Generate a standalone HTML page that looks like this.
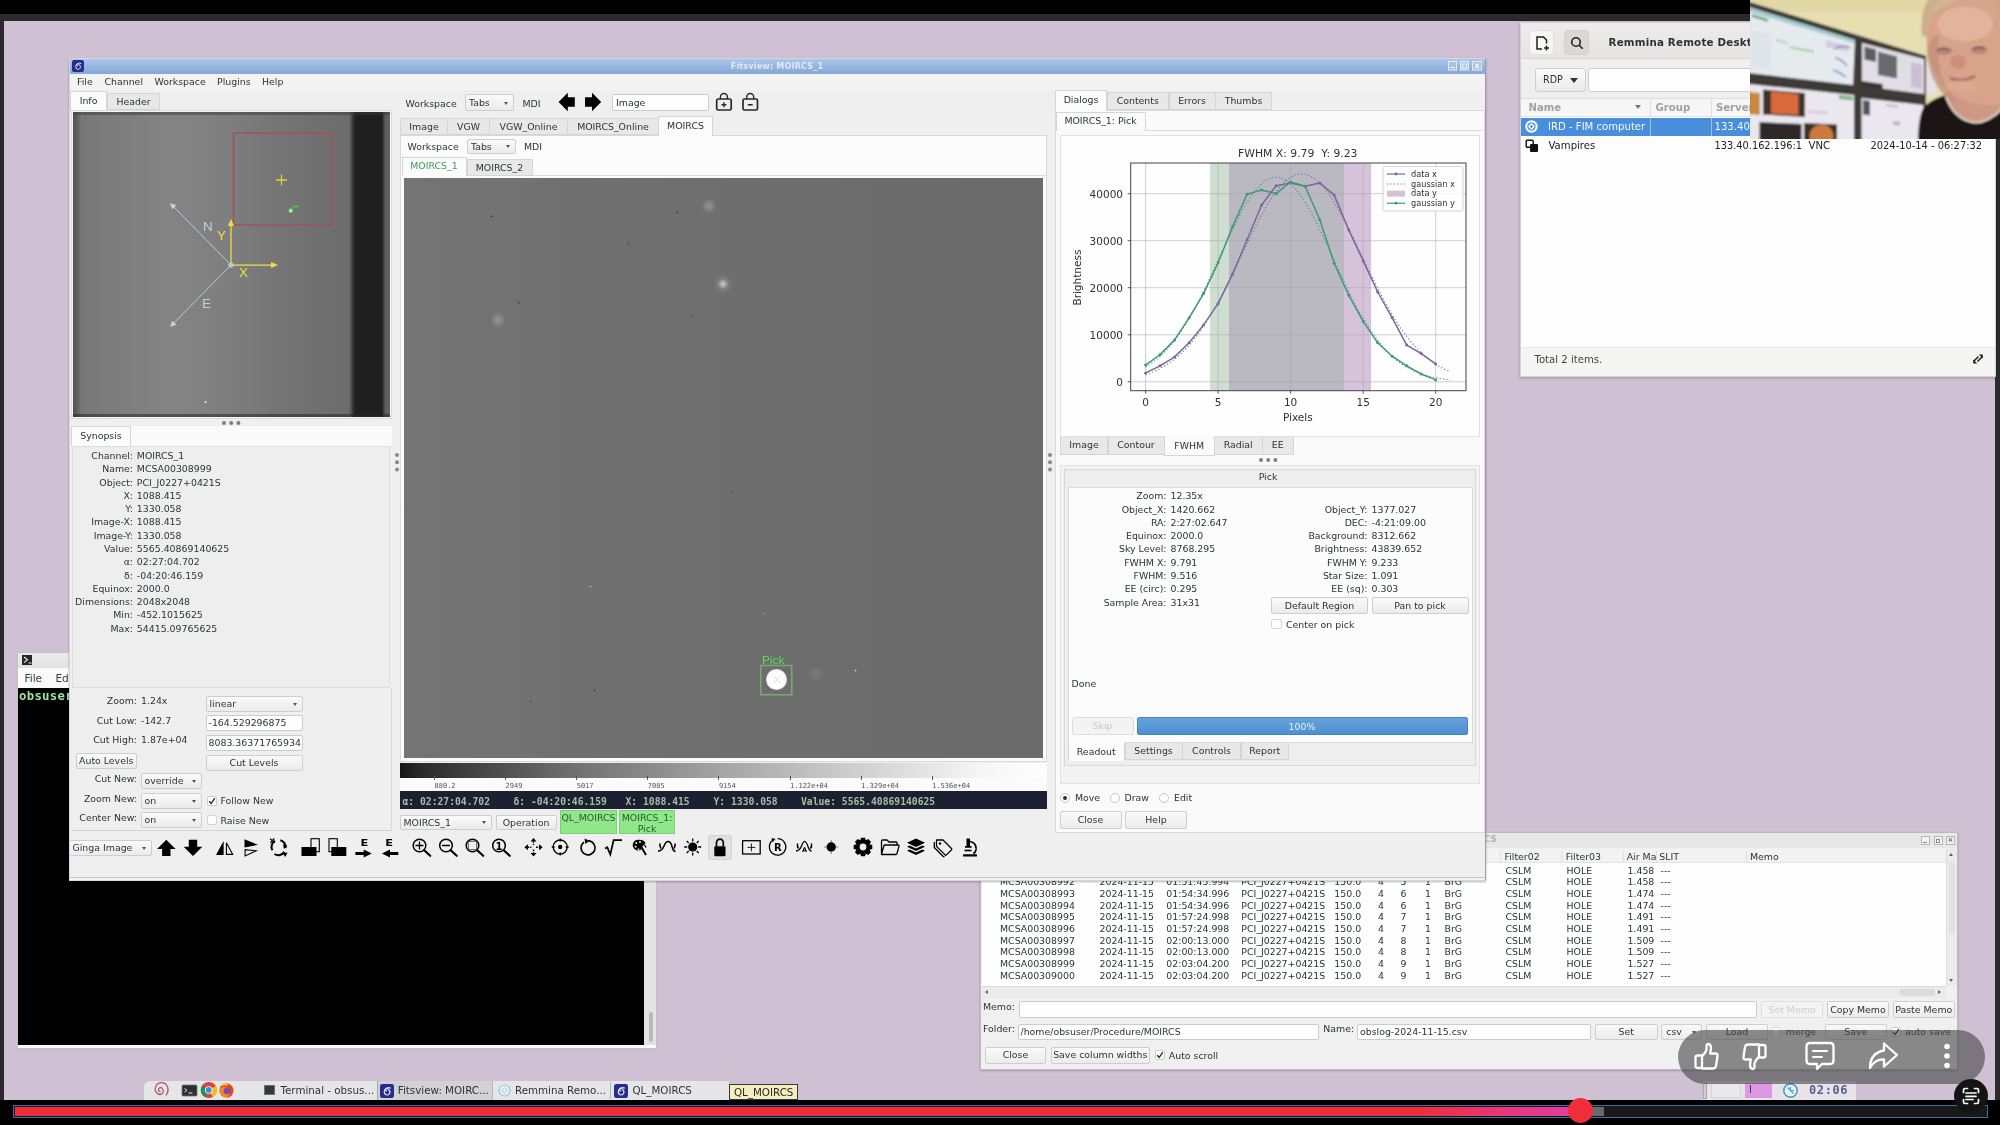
<!DOCTYPE html>
<html><head><meta charset="utf-8"><title>Fitsview: MOIRCS_1</title>
<style>
*{box-sizing:border-box;margin:0;padding:0}
html,body{width:2000px;height:1125px;overflow:hidden;background:#000}
body{position:relative;font-family:"DejaVu Sans","Liberation Sans",sans-serif;font-size:9.4px;color:#2e3436;line-height:13px}
.a{position:absolute}
.t{position:absolute;white-space:nowrap}
.r{text-align:right}
.c{text-align:center}
.btn{position:absolute;border:1px solid #cfcfcf;background:linear-gradient(#fbfbfb,#ececec);border-radius:2px;text-align:center;white-space:nowrap}
.inp{position:absolute;border:1px solid #cdcdcd;background:#fff;border-radius:2px;white-space:nowrap;overflow:hidden}
.tab{position:absolute;border:1px solid #d6d6d6;background:#e9e9e9;text-align:center;white-space:nowrap}
.tab.on{background:#fcfcfc;border-bottom-color:#fcfcfc}
.mono{font-family:"DejaVu Sans Mono","Liberation Mono",monospace}
svg{position:absolute;overflow:visible}
</style></head><body>
<div id="root" style="position:absolute;left:0;top:0;width:2000px;height:1125px;will-change:transform;opacity:.999">
<!-- video frame / desktop -->
<div class="a" style="left:0;top:14px;width:2000px;height:1086px;background:#2b2a2c"></div>
<div class="a" id="desk" style="left:4px;top:21px;width:1991px;height:1079px;background:#d0c1d4"></div>
<!-- terminal window -->
<div class="a" style="left:16.500px;top:652px;width:640px;height:397px;background:#fbfbfa;border:1px solid #c4bfc8"></div>
<div class="a" style="left:17.500px;top:653px;width:80px;height:14.500px;background:linear-gradient(#ececeb,#e2e2e0)"></div>
<div class="a" style="left:21.500px;top:655px;width:10.500px;height:9.500px;background:#23272c"></div>
<svg style="left:21.500px;top:655px" width="11" height="10" viewBox="0 0 11 10"><path d="M2 2l3.500 2.800l-3.500 2.800M6.500 8h3" stroke="#e6e6e6" stroke-width="1.200" fill="none"/></svg>
<div class="t" style="left:24.500px;top:669.500px;font-size:10.500px;line-height:16px;color:#3c3c3c">File&nbsp;&nbsp;&nbsp;&nbsp;Edit</div>
<div class="a" style="left:17.500px;top:687.500px;width:626.500px;height:357.500px;background:#000"></div>
<div class="t mono" style="left:19px;top:689px;font-size:12.300px;font-weight:bold;color:#9fe39f;letter-spacing:0.3px;line-height:14px">obsuser</div>
<div class="a" style="left:644px;top:687.500px;width:12px;height:357.500px;background:#e4e4e4"></div>
<div class="a" style="left:648.500px;top:1012px;width:4px;height:30px;background:#b9b9b9;border-radius:2px"></div>
<!-- QL_MOIRCS obslog window (below fitsview in z-order) -->
<div class="a" style="left:980px;top:832px;width:978px;height:238px;background:#f1f1f1;border:1px solid #bdb9c0;box-shadow:0 1px 2px rgba(0,0,0,.2)"></div>
<div class="a" style="left:981px;top:833px;width:976px;height:15px;background:#e9e9ea"></div>
<div class="t c" style="left:1419px;top:833px;width:100px;font-size:8.6px;font-weight:bold;color:#b4b4b4">QL_MOIRCS</div>
<div class="a" style="left:1921px;top:836px;width:9px;height:9px;border:1px solid #b7b7b7;background:#f4f4f4"></div>
<div class="a" style="left:1933.5px;top:836px;width:9px;height:9px;border:1px solid #b7b7b7;background:#f4f4f4"></div>
<div class="a" style="left:1946px;top:836px;width:9px;height:9px;border:1px solid #b7b7b7;background:#f4f4f4"></div>
<div class="a" style="left:1923px;top:842px;width:4px;height:1px;background:#888"></div>
<div class="a" style="left:1936px;top:838.5px;width:4px;height:4px;border:1px solid #888"></div>
<div class="t" style="left:1947.5px;top:834px;font-size:7px;line-height:12px;color:#666;font-weight:bold">×</div>
<div class="a" style="left:982px;top:849px;width:964px;height:137px;background:#fff"></div>
<div class="a" style="left:982px;top:849px;width:964px;height:14px;background:#f3f3f3;border-bottom:1px solid #e3e3e3"></div>
<div class="t" style="left:1504.5px;top:850.3px">Filter02</div>
<div class="t" style="left:1565.8px;top:850.3px">Filter03</div>
<div class="t" style="left:1626.7px;top:850.3px">Air Ma</div>
<div class="t" style="left:1659.3px;top:850.3px">SLIT</div>
<div class="t" style="left:1750px;top:850.3px">Memo</div>
<div class="a" style="left:1500px;top:851px;width:1px;height:11px;background:#e0e0e0"></div>
<div class="a" style="left:1561px;top:851px;width:1px;height:11px;background:#e0e0e0"></div>
<div class="a" style="left:1622.5px;top:851px;width:1px;height:11px;background:#e0e0e0"></div>
<div class="a" style="left:1655.5px;top:851px;width:1px;height:11px;background:#e0e0e0"></div>
<div class="a" style="left:1746px;top:851px;width:1px;height:11px;background:#e0e0e0"></div>
<div class="t" style="left:0;top:863.5px;width:1800px;height:13px"><span class="t" style="left:1000px;top:0">MCSA00308991</span><span class="t" style="left:1099.5px;top:0">2024-11-15</span><span class="t" style="left:1166.3px;top:0">01:51:45.994</span><span class="t" style="left:1241.3px;top:0">PCI_J0227+0421S</span><span class="t" style="left:1334.3px;top:0">150.0</span><span class="t" style="left:1378px;top:0">4</span><span class="t" style="left:1400.5px;top:0">5</span><span class="t" style="left:1425px;top:0">1</span><span class="t" style="left:1444.5px;top:0">BrG</span><span class="t" style="left:1505.5px;top:0">CSLM</span><span class="t" style="left:1566.5px;top:0">HOLE</span><span class="t" style="left:1627.5px;top:0">1.458</span><span class="t" style="left:1660.5px;top:0">---</span></div>
<div class="t" style="left:0;top:875.2px;width:1800px;height:13px"><span class="t" style="left:1000px;top:0">MCSA00308992</span><span class="t" style="left:1099.5px;top:0">2024-11-15</span><span class="t" style="left:1166.3px;top:0">01:51:45.994</span><span class="t" style="left:1241.3px;top:0">PCI_J0227+0421S</span><span class="t" style="left:1334.3px;top:0">150.0</span><span class="t" style="left:1378px;top:0">4</span><span class="t" style="left:1400.5px;top:0">5</span><span class="t" style="left:1425px;top:0">1</span><span class="t" style="left:1444.5px;top:0">BrG</span><span class="t" style="left:1505.5px;top:0">CSLM</span><span class="t" style="left:1566.5px;top:0">HOLE</span><span class="t" style="left:1627.5px;top:0">1.458</span><span class="t" style="left:1660.5px;top:0">---</span></div>
<div class="t" style="left:0;top:886.9px;width:1800px;height:13px"><span class="t" style="left:1000px;top:0">MCSA00308993</span><span class="t" style="left:1099.5px;top:0">2024-11-15</span><span class="t" style="left:1166.3px;top:0">01:54:34.996</span><span class="t" style="left:1241.3px;top:0">PCI_J0227+0421S</span><span class="t" style="left:1334.3px;top:0">150.0</span><span class="t" style="left:1378px;top:0">4</span><span class="t" style="left:1400.5px;top:0">6</span><span class="t" style="left:1425px;top:0">1</span><span class="t" style="left:1444.5px;top:0">BrG</span><span class="t" style="left:1505.5px;top:0">CSLM</span><span class="t" style="left:1566.5px;top:0">HOLE</span><span class="t" style="left:1627.5px;top:0">1.474</span><span class="t" style="left:1660.5px;top:0">---</span></div>
<div class="t" style="left:0;top:898.6px;width:1800px;height:13px"><span class="t" style="left:1000px;top:0">MCSA00308994</span><span class="t" style="left:1099.5px;top:0">2024-11-15</span><span class="t" style="left:1166.3px;top:0">01:54:34.996</span><span class="t" style="left:1241.3px;top:0">PCI_J0227+0421S</span><span class="t" style="left:1334.3px;top:0">150.0</span><span class="t" style="left:1378px;top:0">4</span><span class="t" style="left:1400.5px;top:0">6</span><span class="t" style="left:1425px;top:0">1</span><span class="t" style="left:1444.5px;top:0">BrG</span><span class="t" style="left:1505.5px;top:0">CSLM</span><span class="t" style="left:1566.5px;top:0">HOLE</span><span class="t" style="left:1627.5px;top:0">1.474</span><span class="t" style="left:1660.5px;top:0">---</span></div>
<div class="t" style="left:0;top:910.3px;width:1800px;height:13px"><span class="t" style="left:1000px;top:0">MCSA00308995</span><span class="t" style="left:1099.5px;top:0">2024-11-15</span><span class="t" style="left:1166.3px;top:0">01:57:24.998</span><span class="t" style="left:1241.3px;top:0">PCI_J0227+0421S</span><span class="t" style="left:1334.3px;top:0">150.0</span><span class="t" style="left:1378px;top:0">4</span><span class="t" style="left:1400.5px;top:0">7</span><span class="t" style="left:1425px;top:0">1</span><span class="t" style="left:1444.5px;top:0">BrG</span><span class="t" style="left:1505.5px;top:0">CSLM</span><span class="t" style="left:1566.5px;top:0">HOLE</span><span class="t" style="left:1627.5px;top:0">1.491</span><span class="t" style="left:1660.5px;top:0">---</span></div>
<div class="t" style="left:0;top:922.0px;width:1800px;height:13px"><span class="t" style="left:1000px;top:0">MCSA00308996</span><span class="t" style="left:1099.5px;top:0">2024-11-15</span><span class="t" style="left:1166.3px;top:0">01:57:24.998</span><span class="t" style="left:1241.3px;top:0">PCI_J0227+0421S</span><span class="t" style="left:1334.3px;top:0">150.0</span><span class="t" style="left:1378px;top:0">4</span><span class="t" style="left:1400.5px;top:0">7</span><span class="t" style="left:1425px;top:0">1</span><span class="t" style="left:1444.5px;top:0">BrG</span><span class="t" style="left:1505.5px;top:0">CSLM</span><span class="t" style="left:1566.5px;top:0">HOLE</span><span class="t" style="left:1627.5px;top:0">1.491</span><span class="t" style="left:1660.5px;top:0">---</span></div>
<div class="t" style="left:0;top:933.7px;width:1800px;height:13px"><span class="t" style="left:1000px;top:0">MCSA00308997</span><span class="t" style="left:1099.5px;top:0">2024-11-15</span><span class="t" style="left:1166.3px;top:0">02:00:13.000</span><span class="t" style="left:1241.3px;top:0">PCI_J0227+0421S</span><span class="t" style="left:1334.3px;top:0">150.0</span><span class="t" style="left:1378px;top:0">4</span><span class="t" style="left:1400.5px;top:0">8</span><span class="t" style="left:1425px;top:0">1</span><span class="t" style="left:1444.5px;top:0">BrG</span><span class="t" style="left:1505.5px;top:0">CSLM</span><span class="t" style="left:1566.5px;top:0">HOLE</span><span class="t" style="left:1627.5px;top:0">1.509</span><span class="t" style="left:1660.5px;top:0">---</span></div>
<div class="t" style="left:0;top:945.4px;width:1800px;height:13px"><span class="t" style="left:1000px;top:0">MCSA00308998</span><span class="t" style="left:1099.5px;top:0">2024-11-15</span><span class="t" style="left:1166.3px;top:0">02:00:13.000</span><span class="t" style="left:1241.3px;top:0">PCI_J0227+0421S</span><span class="t" style="left:1334.3px;top:0">150.0</span><span class="t" style="left:1378px;top:0">4</span><span class="t" style="left:1400.5px;top:0">8</span><span class="t" style="left:1425px;top:0">1</span><span class="t" style="left:1444.5px;top:0">BrG</span><span class="t" style="left:1505.5px;top:0">CSLM</span><span class="t" style="left:1566.5px;top:0">HOLE</span><span class="t" style="left:1627.5px;top:0">1.509</span><span class="t" style="left:1660.5px;top:0">---</span></div>
<div class="t" style="left:0;top:957.1px;width:1800px;height:13px"><span class="t" style="left:1000px;top:0">MCSA00308999</span><span class="t" style="left:1099.5px;top:0">2024-11-15</span><span class="t" style="left:1166.3px;top:0">02:03:04.200</span><span class="t" style="left:1241.3px;top:0">PCI_J0227+0421S</span><span class="t" style="left:1334.3px;top:0">150.0</span><span class="t" style="left:1378px;top:0">4</span><span class="t" style="left:1400.5px;top:0">9</span><span class="t" style="left:1425px;top:0">1</span><span class="t" style="left:1444.5px;top:0">BrG</span><span class="t" style="left:1505.5px;top:0">CSLM</span><span class="t" style="left:1566.5px;top:0">HOLE</span><span class="t" style="left:1627.5px;top:0">1.527</span><span class="t" style="left:1660.5px;top:0">---</span></div>
<div class="t" style="left:0;top:968.8px;width:1800px;height:13px"><span class="t" style="left:1000px;top:0">MCSA00309000</span><span class="t" style="left:1099.5px;top:0">2024-11-15</span><span class="t" style="left:1166.3px;top:0">02:03:04.200</span><span class="t" style="left:1241.3px;top:0">PCI_J0227+0421S</span><span class="t" style="left:1334.3px;top:0">150.0</span><span class="t" style="left:1378px;top:0">4</span><span class="t" style="left:1400.5px;top:0">9</span><span class="t" style="left:1425px;top:0">1</span><span class="t" style="left:1444.5px;top:0">BrG</span><span class="t" style="left:1505.5px;top:0">CSLM</span><span class="t" style="left:1566.5px;top:0">HOLE</span><span class="t" style="left:1627.5px;top:0">1.527</span><span class="t" style="left:1660.5px;top:0">---</span></div>
<div class="a" style="left:1946px;top:849px;width:11px;height:137px;background:#ececec;border-left:1px solid #dedede"></div>
<div class="a" style="left:1949px;top:853px;border:2.5px solid transparent;border-bottom:3px solid #666;border-top:none"></div>
<div class="a" style="left:1949px;top:979px;border:2.5px solid transparent;border-top:3px solid #666;border-bottom:none"></div>
<div class="a" style="left:1948.5px;top:862px;width:6px;height:72px;background:#e2e2e2;border-radius:3px"></div>
<div class="a" style="left:982px;top:986px;width:964px;height:11.5px;background:#ececec;border-top:1px solid #dedede"></div>
<div class="a" style="left:985px;top:989.5px;border:2.5px solid transparent;border-right:3px solid #666;border-left:none"></div>
<div class="a" style="left:1938px;top:989.5px;border:2.5px solid transparent;border-left:3px solid #666;border-right:none"></div>
<div class="a" style="left:1899px;top:988.5px;width:36px;height:7px;background:#dcdcdc;border-radius:3px"></div>
<div class="t" style="left:983px;top:999.5px">Memo:</div>
<div class="inp" style="left:1018.5px;top:1001px;width:738.5px;height:17px"></div>
<div class="btn" style="left:1761px;top:1001px;width:62px;height:17px;line-height:15px;color:#cfcfcf;background:#f4f4f4;border-color:#e0e0e0">Set Memo</div>
<div class="btn" style="left:1827px;top:1001px;width:62px;height:17px;line-height:15px">Copy Memo</div>
<div class="btn" style="left:1892.5px;top:1001px;width:62.5px;height:17px;line-height:15px">Paste Memo</div>
<div class="t" style="left:983px;top:1022px">Folder:</div>
<div class="inp" style="left:1017.5px;top:1023.5px;width:301.5px;height:16.5px;line-height:14.5px;padding-left:2px">/home/obsuser/Procedure/MOIRCS</div>
<div class="t" style="left:1323.3px;top:1022px">Name:</div>
<div class="inp" style="left:1357px;top:1023.5px;width:234px;height:16.5px;line-height:14.5px;padding-left:2px">obslog-2024-11-15.csv</div>
<div class="btn" style="left:1595px;top:1023.5px;width:62.5px;height:16.5px;line-height:14.5px">Set</div>
<div class="btn" style="left:1661.3px;top:1023.5px;width:41px;height:16.5px;line-height:14.5px;text-align:left;padding-left:4px">csv<span class="a" style="right:5px;top:6px;border:2.5px solid transparent;border-top:3px solid #555"></span></div>
<div class="btn" style="left:1706.3px;top:1023.5px;width:61.5px;height:16.5px;line-height:14.5px">Load</div>
<div class="a" style="left:1771.3px;top:1026.5px;width:10px;height:10px;background:#fff;border:1px solid #d6d6d6;border-radius:2px"></div>
<div class="t" style="left:1785.8px;top:1025px">merge</div>
<div class="btn" style="left:1825px;top:1023.5px;width:61.5px;height:16.5px;line-height:14.5px">Save</div>
<div class="a" style="left:1891px;top:1026.5px;width:10px;height:10px;background:#fff;border:1px solid #cfcfcf;border-radius:2px"></div>
<svg style="left:1891px;top:1026.5px" width="10" height="10" viewBox="0 0 10 10"><path d="M2.2 5.2l2 2.300l3.600 -5.300" fill="none" stroke="#222" stroke-width="1.300"/></svg>
<div class="t" style="left:1905px;top:1025px">auto save</div>
<div class="btn" style="left:985px;top:1047px;width:61px;height:16.5px;line-height:14.5px">Close</div>
<div class="btn" style="left:1050.5px;top:1047px;width:99.5px;height:16.5px;line-height:14.5px">Save column widths</div>
<div class="a" style="left:1154.5px;top:1050px;width:10px;height:10px;background:#fff;border:1px solid #cfcfcf;border-radius:2px"></div>
<svg style="left:1154.5px;top:1050px" width="10" height="10" viewBox="0 0 10 10"><path d="M2.2 5.2l2 2.300l3.600 -5.300" fill="none" stroke="#222" stroke-width="1.300"/></svg>
<div class="t" style="left:1168.8px;top:1048.5px">Auto scroll</div>
<!-- Fitsview window -->
<div class="a" id="fv" style="left:69px;top:58px;width:1417px;height:822.800px;background:#f0f0f0;border:1px solid #d3d8e2;border-right:1.500px solid #a09da3;box-shadow:0 1px 2px rgba(0,0,0,.28)"></div>
<div class="a" style="left:70px;top:876.800px;width:1415px;height:1.300px;background:#c6c6c6"></div>
<div class="a" style="left:70px;top:878.100px;width:1415px;height:2px;background:#f4f4f4"></div>
<div class="a" style="left:70px;top:59px;width:1415px;height:15px;background:linear-gradient(#afc8ea,#95b4df 55%,#89a9d8)"></div>
<svg style="left:72px;top:60px" width="12" height="12" viewBox="0 0 12 12"><rect width="12" height="12" rx="2" fill="#26308c"/><path d="M6 6.2a1.2 1.2 0 1 1 1.3-1.3a2.4 2.4 0 1 1-3.6 1.7a3.6 3.6 0 0 1 5.6-2.9" fill="none" stroke="#dfe6ff" stroke-width="1"/></svg>
<div class="t c" style="left:677px;top:59px;width:200px;font-size:8.100px;line-height:14px;color:#e2eaf7;font-weight:bold;letter-spacing:.15px">Fitsview: MOIRCS_1</div>
<svg style="left:1447px;top:60px" width="38" height="12" viewBox="1447 60 38 12"><g fill="#a9c2e6" stroke="#e6eefa" stroke-width="1"><rect x="1448.500" y="61.500" width="8" height="8.500"/><rect x="1460.500" y="61.500" width="8" height="8.500"/><rect x="1472.500" y="61.500" width="9" height="8.500"/></g><path d="M1450.500 67.500h4M1462.500 64h4v4h-4zM1475 63.500l4 4.500M1479 63.500l-4 4.500" stroke="#f4f8fe" stroke-width="1.200" fill="none"/></svg>
<!-- menubar -->
<div class="a" style="left:70px;top:74px;width:1415px;height:16px;background:#f4f4f4"></div>
<div class="t" style="left:77px;top:75px">File</div>
<div class="t" style="left:104.5px;top:75px">Channel</div>
<div class="t" style="left:154.5px;top:75px">Workspace</div>
<div class="t" style="left:217px;top:75px">Plugins</div>
<div class="t" style="left:262px;top:75px">Help</div>
<!-- left panel tabs -->
<div class="tab on" style="left:70px;top:91px;width:37px;height:20px;line-height:17px;border-bottom:none">Info</div>
<div class="tab" style="left:107px;top:93px;width:53px;height:17px;line-height:15px">Header</div>
<!-- pan image -->
<div class="a" style="left:71px;top:110px;width:321px;height:309px;background:#f6f6f6;border:1px solid #dcdcdc"></div>
<div class="a" style="left:73px;top:112px;width:317px;height:305px;background:linear-gradient(90deg,#545454 0,#626262 5px,#787878 8px,#7f7f7f 50px,#858585 95px,#808080 150px,#767676 205px,#6d6d6d 276px,#2a2a2a 281px,#1f1f1f 284px,#202020 309px,#5a5a5a 312px,#666 317px)"></div>
<div class="a" style="left:73px;top:112px;width:317px;height:3px;background:rgba(60,60,60,.5)"></div>
<div class="a" style="left:73px;top:414px;width:317px;height:3px;background:rgba(40,40,40,.55)"></div>
<svg style="left:73px;top:112px" width="317" height="305" viewBox="73 112 317 305">
 <rect x="233.5" y="133" width="98.5" height="92" fill="none" stroke="#a94f57" stroke-width="1.5" stroke-opacity=".9"/>
 <path d="M276 180h11M281.5 174.500v11" stroke="#e2d23a" stroke-width="1.3" fill="none"/>
 <g stroke="#b9d6dd" stroke-width="1" fill="#b9d6dd" stroke-opacity=".9">
  <path d="M231 265L171 204M231 265L171 326" fill="none"/>
  <path d="M170 203l6.500 2.200l-4.300 4.300zM170 327l6.500 -2.200l-4.300 -4.300z" stroke="none"/>
 </g>
 <g stroke="#f0e13c" stroke-width="1.25" fill="#f0e13c">
  <path d="M231 265V224M231 265H272" fill="none"/>
  <path d="M231 219l3 7h-6zM278 265l-7 -3v6z" stroke="none"/>
 </g>
 <circle cx="231" cy="265" r="2.600" fill="#a8d4d8"/>
 <text x="203" y="231" font-size="13.500" fill="#b9d6dd" font-family="Liberation Sans,sans-serif">N</text>
 <text x="202" y="308" font-size="13.500" fill="#b9d6dd" font-family="Liberation Sans,sans-serif">E</text>
 <text x="217" y="240" font-size="13.500" fill="#f0e13c" font-family="Liberation Sans,sans-serif">Y</text>
 <text x="239" y="277" font-size="13.500" fill="#f0e13c" font-family="Liberation Sans,sans-serif">X</text>
 <circle cx="290.800" cy="210.600" r="2.300" fill="#6fe36a"/><circle cx="290.500" cy="211" r="1" fill="#d8ffd4"/>
 <path d="M292.500 207.500q3 -2.500 6.500 -.5" stroke="#58c94a" stroke-width="1.800" fill="none" stroke-opacity=".85"/>
 <circle cx="205.500" cy="402" r="1.100" fill="#e8e8e8"/>
</svg>
<div class="a" style="left:222.100px;top:420.600px;width:4px;height:4px;border-radius:50%;background:#808080;box-shadow:7.200px 0 0 #808080,14.400px 0 0 #808080"></div>
<!-- synopsis -->
<div class="a" style="left:71px;top:426px;width:321px;height:20px;background:#fbfbfb"></div>
<div class="tab on" style="left:71px;top:426px;width:60px;height:20px;line-height:18px;border-bottom:none">Synopsis</div>
<div class="a" style="left:72px;top:446px;width:318px;height:242px;background:#efefef;border:1px solid #dedede"></div>
<div class="t r" style="left:73px;top:449px;width:60px">Channel:</div><div class="t" style="left:136.8px;top:449px">MOIRCS_1</div>
<div class="t r" style="left:73px;top:462px;width:60px">Name:</div><div class="t" style="left:136.8px;top:462px">MCSA00308999</div>
<div class="t r" style="left:73px;top:476px;width:60px">Object:</div><div class="t" style="left:136.8px;top:476px">PCI_J0227+0421S</div>
<div class="t r" style="left:73px;top:489px;width:60px">X:</div><div class="t" style="left:136.8px;top:489px">1088.415</div>
<div class="t r" style="left:73px;top:502px;width:60px">Y:</div><div class="t" style="left:136.8px;top:502px">1330.058</div>
<div class="t r" style="left:73px;top:515px;width:60px">Image-X:</div><div class="t" style="left:136.8px;top:515px">1088.415</div>
<div class="t r" style="left:73px;top:529px;width:60px">Image-Y:</div><div class="t" style="left:136.8px;top:529px">1330.058</div>
<div class="t r" style="left:73px;top:542px;width:60px">Value:</div><div class="t" style="left:136.8px;top:542px">5565.40869140625</div>
<div class="t r" style="left:73px;top:555px;width:60px">α:</div><div class="t" style="left:136.8px;top:555px">02:27:04.702</div>
<div class="t r" style="left:73px;top:569px;width:60px">δ:</div><div class="t" style="left:136.8px;top:569px">-04:20:46.159</div>
<div class="t r" style="left:73px;top:582px;width:60px">Equinox:</div><div class="t" style="left:136.8px;top:582px">2000.0</div>
<div class="t r" style="left:73px;top:595px;width:60px">Dimensions:</div><div class="t" style="left:136.8px;top:595px">2048x2048</div>
<div class="t r" style="left:73px;top:608px;width:60px">Min:</div><div class="t" style="left:136.8px;top:608px">-452.1015625</div>
<div class="t r" style="left:73px;top:622px;width:60px">Max:</div><div class="t" style="left:136.8px;top:622px">54415.09765625</div>
<!-- left bottom controls -->
<div class="a" style="left:72px;top:688px;width:320px;height:143px;background:#f0f0f0;border-bottom:1px solid #d5d5d5;border-right:1px solid #dcdcdc"></div>
<div class="t r" style="left:77px;top:694px;width:60px">Zoom:</div><div class="t" style="left:141px;top:694px">1.24x</div>
<div class="t r" style="left:77px;top:713.500px;width:60px">Cut Low:</div><div class="t" style="left:141px;top:713.500px">-142.7</div>
<div class="t r" style="left:77px;top:733px;width:60px">Cut High:</div><div class="t" style="left:141px;top:733px">1.87e+04</div>
<div class="btn" style="left:205.500px;top:695.500px;width:97px;height:16px;text-align:left;padding-left:3px;line-height:14px">linear<span class="a" style="right:5px;top:6px;border:2.500px solid transparent;border-top:3px solid #555"></span></div>
<div class="inp" style="left:205.500px;top:715px;width:97px;height:16px;padding-left:2px;line-height:14px">-164.529296875</div>
<div class="inp" style="left:205.500px;top:735px;width:97px;height:16px;padding-left:2px;line-height:14px">8083.36371765934</div>
<div class="btn" style="left:205.500px;top:754.500px;width:97px;height:16px;line-height:14px">Cut Levels</div>
<div class="btn" style="left:75.500px;top:752.500px;width:61.500px;height:16.500px;line-height:14.500px">Auto Levels</div>
<div class="t r" style="left:77px;top:772px;width:60px">Cut New:</div>
<div class="btn" style="left:140.500px;top:773px;width:61px;height:16px;text-align:left;padding-left:3px;line-height:14px">override<span class="a" style="right:5px;top:6px;border:2.500px solid transparent;border-top:3px solid #555"></span></div>
<div class="t r" style="left:77px;top:791.500px;width:60px">Zoom New:</div>
<div class="btn" style="left:140.500px;top:792.500px;width:61px;height:16px;text-align:left;padding-left:3px;line-height:14px">on<span class="a" style="right:5px;top:6px;border:2.500px solid transparent;border-top:3px solid #555"></span></div>
<div class="t r" style="left:77px;top:811px;width:60px">Center New:</div>
<div class="btn" style="left:140.500px;top:812px;width:61px;height:16px;text-align:left;padding-left:3px;line-height:14px">on<span class="a" style="right:5px;top:6px;border:2.500px solid transparent;border-top:3px solid #555"></span></div>
<div class="a" style="left:206.500px;top:795.500px;width:10px;height:10px;background:#fff;border:1px solid #cfcfcf;border-radius:2px"></div>
<svg style="left:206.500px;top:795.500px" width="10" height="10" viewBox="0 0 10 10"><path d="M2.200 5.200l2 2.300l3.600 -5.300" fill="none" stroke="#222" stroke-width="1.300"/></svg>
<div class="t" style="left:220.500px;top:794px">Follow New</div>
<div class="a" style="left:206.500px;top:815px;width:10px;height:10px;background:#fff;border:1px solid #d6d6d6;border-radius:2px"></div>
<div class="t" style="left:220.500px;top:813.500px">Raise New</div>
<!-- splitter dots -->
<div class="a" style="left:394.500px;top:453px;width:4px;height:4px;border-radius:2px;background:#8a8a8a;box-shadow:0 7.200px 0 #8a8a8a,0 14.400px 0 #8a8a8a"></div>
<div class="a" style="left:1047.500px;top:453px;width:4px;height:4px;border-radius:2px;background:#8a8a8a;box-shadow:0 7.200px 0 #8a8a8a,0 14.400px 0 #8a8a8a"></div>
<!-- center panel -->
<div class="t" style="left:405.500px;top:96.500px">Workspace</div>
<div class="btn" style="left:465px;top:94px;width:49px;height:17px;text-align:left;padding-left:3px;line-height:15px">Tabs<span class="a" style="right:5px;top:6.500px;border:2.500px solid transparent;border-top:3px solid #555"></span></div>
<div class="t" style="left:522.500px;top:96.500px">MDI</div>
<svg style="left:557px;top:92px" width="46" height="20" viewBox="557 92 46 20"><path d="M558.600 102l9.200 -9.200v4.400h7v9.600h-7v4.400z" fill="#000"/><path d="M601.200 102l-9.200 -9.200v4.400h-7v9.600h7v4.400z" fill="#000"/></svg>
<div class="inp" style="left:612px;top:94px;width:97px;height:17px;padding-left:3px;line-height:15px">Image</div>
<svg style="left:714px;top:92px" width="46" height="20" viewBox="714 92 46 20" fill="none" stroke="#2a2a2a" stroke-width="1.700"><rect x="716.700" y="99" width="14.500" height="11" rx="1.500"/><path d="M720.400 99v-2a3.500 3.500 0 0 1 7 0v2M721.400 104.800h5M723.900 102.300v5" stroke-width="1.400"/><rect x="743" y="99" width="14.500" height="11" rx="1.500"/><path d="M746.700 99v-2a3.500 3.500 0 0 1 7 0v2M747.700 104.800h5" stroke-width="1.400"/></svg>
<!-- tab row 1 -->
<div class="tab" style="left:400px;top:118px;width:48px;height:17px;line-height:15px">Image</div>
<div class="tab" style="left:447px;top:118px;width:43px;height:17px;line-height:15px">VGW</div>
<div class="tab" style="left:489px;top:118px;width:79px;height:17px;line-height:15px">VGW_Online</div>
<div class="tab" style="left:567px;top:118px;width:92px;height:17px;line-height:15px">MOIRCS_Online</div>
<div class="a" style="left:400px;top:135px;width:647px;height:627px;background:#fcfcfc;border:1px solid #dadada"></div>
<div class="tab on" style="left:658px;top:116px;width:55px;height:20px;line-height:17px;border-bottom:none">MOIRCS</div>
<div class="t" style="left:407.500px;top:140px">Workspace</div>
<div class="btn" style="left:467px;top:138.500px;width:48.500px;height:15.500px;text-align:left;padding-left:3px;line-height:13px">Tabs<span class="a" style="right:5px;top:5.500px;border:2.500px solid transparent;border-top:3px solid #555"></span></div>
<div class="t" style="left:524px;top:140px">MDI</div>
<div class="a" style="left:401px;top:175px;width:645px;height:1px;background:#dcdcdc"></div>
<div class="tab on" style="left:401.500px;top:157px;width:65px;height:19px;line-height:16px;border-bottom:none;color:#3f9a5c">MOIRCS_1</div>
<div class="tab" style="left:466.500px;top:158.500px;width:66px;height:17px;line-height:15px">MOIRCS_2</div>
<!-- main image -->
<div class="a" id="img" style="left:403.500px;top:177.500px;width:639px;height:580.500px;background:linear-gradient(90deg,#757575,#717171 30%,#6e6e6e 60%,#6c6c6c);overflow:hidden">
 <div class="a" style="left:297px;top:20px;width:16px;height:16px;border-radius:50%;background:radial-gradient(rgba(160,160,160,.8),rgba(120,120,120,0) 70%)"></div>
 <div class="a" style="left:309px;top:96px;width:20px;height:20px;border-radius:50%;background:radial-gradient(rgba(200,200,200,.9) 8%,rgba(140,140,140,.5) 38%,rgba(112,112,112,0) 70%)"></div>
 <div class="a" style="left:86px;top:134px;width:16px;height:16px;border-radius:50%;background:radial-gradient(rgba(160,160,160,.8),rgba(120,120,120,0) 70%)"></div>
 <div class="a" style="left:403.500px;top:487.500px;width:18px;height:18px;border-radius:50%;background:radial-gradient(rgba(135,135,135,.6),rgba(112,112,112,0) 70%)"></div>
  <div class="a" style="left:362.500px;top:491.100px;width:21px;height:21px;border-radius:50%;background:radial-gradient(#fff 58%,rgba(240,240,240,.9) 70%,rgba(180,180,180,.5) 84%,rgba(112,112,112,0) 100%)"></div>
</div>
<svg style="left:403.500px;top:177.500px" width="639" height="580" viewBox="403.500 177.500 639 580">
 <rect x="760.300" y="665" width="31" height="29.300" fill="none" stroke="#86d278" stroke-width="1.500" stroke-opacity=".6"/>
 <text x="761.500" y="663.700" font-size="11.800" fill="#62d957" font-family="Liberation Sans,sans-serif">Pick</text>
 <path d="M773 675.600l7 7M780 675.600l-7 7" stroke="#cdeee6" stroke-width="1.300" stroke-opacity=".9"/>
 <g fill="#3d3d3d"><circle cx="677" cy="212" r="1"/><circle cx="491" cy="216" r=".9"/><circle cx="628" cy="243" r=".8"/><circle cx="518" cy="302" r=".9"/><circle cx="692" cy="316" r=".8"/><circle cx="594" cy="690" r=".9"/><circle cx="530" cy="701" r=".8"/><circle cx="731" cy="491" r=".7"/></g>
 <g fill="#c9c9c9"><circle cx="590" cy="586" r=".8"/><circle cx="855" cy="670" r=".9"/><circle cx="764" cy="613" r=".6"/></g>
</svg>
<!-- colorbar -->
<div class="a" style="left:400px;top:762.500px;width:647px;height:15.500px;background:linear-gradient(90deg,#161616,#2a2a2a 3%,#6c6c6c 25%,#a6a6a6 50%,#d9d9d9 75%,#f7f7f7 90%,#fff)"></div>
<div class="a" style="left:400px;top:778px;width:647px;height:13px;background:#fcfcfc"></div>
<div class="t mono" style="left:434.5px;top:781px;font-size:7px;line-height:10px;color:#555">880.2</div>
<div class="a" style="left:434.0px;top:776px;width:1px;height:4px;background:#555"></div>
<div class="t mono" style="left:505.6px;top:781px;font-size:7px;line-height:10px;color:#555">2949</div>
<div class="a" style="left:505.1px;top:776px;width:1px;height:4px;background:#555"></div>
<div class="t mono" style="left:576.7px;top:781px;font-size:7px;line-height:10px;color:#555">5017</div>
<div class="a" style="left:576.2px;top:776px;width:1px;height:4px;background:#555"></div>
<div class="t mono" style="left:647.8px;top:781px;font-size:7px;line-height:10px;color:#555">7085</div>
<div class="a" style="left:647.3px;top:776px;width:1px;height:4px;background:#555"></div>
<div class="t mono" style="left:718.9px;top:781px;font-size:7px;line-height:10px;color:#555">9154</div>
<div class="a" style="left:718.4px;top:776px;width:1px;height:4px;background:#555"></div>
<div class="t mono" style="left:790.0px;top:781px;font-size:7px;line-height:10px;color:#555">1.122e+04</div>
<div class="a" style="left:789.5px;top:776px;width:1px;height:4px;background:#555"></div>
<div class="t mono" style="left:861.1px;top:781px;font-size:7px;line-height:10px;color:#555">1.329e+04</div>
<div class="a" style="left:860.6px;top:776px;width:1px;height:4px;background:#555"></div>
<div class="t mono" style="left:932.2px;top:781px;font-size:7px;line-height:10px;color:#555">1.536e+04</div>
<div class="a" style="left:931.7px;top:776px;width:1px;height:4px;background:#555"></div>
<div class="a" style="left:400px;top:791px;width:647px;height:17.500px;background:#1e2132"></div>
<div class="t mono" style="left:402.500px;top:796px;font-size:9.700px;line-height:12px;color:#a3bfa8;font-weight:bold">α: 02:27:04.702</div>
<div class="t mono" style="left:513.500px;top:796px;font-size:9.700px;line-height:12px;color:#a3bfa8;font-weight:bold">δ: -04:20:46.159</div>
<div class="t mono" style="left:625.500px;top:796px;font-size:9.700px;line-height:12px;color:#a3bfa8;font-weight:bold">X: 1088.415</div>
<div class="t mono" style="left:713.500px;top:796px;font-size:9.700px;line-height:12px;color:#a3bfa8;font-weight:bold">Y: 1330.058</div>
<div class="t mono" style="left:801px;top:796px;font-size:9.700px;line-height:12px;color:#a3bfa8;font-weight:bold">Value: 5565.40869140625</div>
<div class="btn" style="left:399.500px;top:814.500px;width:92px;height:15.500px;text-align:left;padding-left:3px;line-height:13px">MOIRCS_1<span class="a" style="right:5px;top:5.500px;border:2.500px solid transparent;border-top:3px solid #555"></span></div>
<div class="btn" style="left:495.500px;top:814.500px;width:61px;height:15.500px;line-height:13px">Operation</div>
<div class="a c" style="left:560px;top:809.500px;width:57px;height:24.500px;background:#8fe889;border:1px solid #7fd07a;color:#2d5a2d;line-height:11px;padding-top:1px">QL_MOIRCS</div>
<div class="a c" style="left:619px;top:809.500px;width:56px;height:24.500px;background:#8fe889;border:1px solid #7fd07a;color:#2d5a2d;line-height:11px;padding-top:1px">MOIRCS_1:<br>Pick</div>
<!-- right panel tabs -->
<div class="a" style="left:1055px;top:109.500px;width:430px;height:723px;background:#fbfbfb;border:1px solid #dcdcdc"></div>
<div class="tab on" style="left:1055px;top:90px;width:52px;height:20.500px;line-height:18px;border-bottom:none">Dialogs</div>
<div class="tab" style="left:1106.500px;top:92px;width:62.500px;height:18px;line-height:16px">Contents</div>
<div class="tab" style="left:1168.500px;top:92px;width:47px;height:18px;line-height:16px">Errors</div>
<div class="tab" style="left:1215px;top:92px;width:57px;height:18px;line-height:16px">Thumbs</div>
<div class="a" style="left:1056px;top:130px;width:428px;height:1px;background:#dedede"></div>
<div class="tab on" style="left:1055.500px;top:112px;width:90px;height:19px;line-height:16px;border-bottom:none">MOIRCS_1: Pick</div>
<!-- right panel: chart -->
<div class="a" style="left:1059.5px;top:134.5px;width:420px;height:302.5px;background:#fff;border:1px solid #e2e2e2"></div>
<svg style="left:1059px;top:134px" width="421" height="303" viewBox="1059 134 421 303" font-family="DejaVu Sans,Liberation Sans,sans-serif">
<rect x="1210.0" y="163" width="133.9" height="227.7" fill="#9fbfa4" fill-opacity=".5"/>
<rect x="1229.1" y="163" width="142.0" height="227.7" fill="#af87b9" fill-opacity=".5"/>
<rect x="1229.1" y="163" width="114.7" height="227.7" fill="#bbb9c2"/>
<path d="M1145.6 163V390.7M1218.1 163V390.7M1290.6 163V390.7M1363.2 163V390.7M1435.7 163V390.7M1130.7 381.8H1466M1130.7 334.8H1466M1130.7 287.7H1466M1130.7 240.7H1466M1130.7 193.7H1466" stroke="#a8a8a8" stroke-opacity=".6" stroke-width=".9" fill="none"/>
<path d="M1145.6 374.5L1149.2 373.2L1152.9 371.8L1156.5 370.3L1160.1 368.5L1163.7 366.5L1167.4 364.3L1171.0 361.8L1174.6 359.1L1178.2 356.1L1181.9 352.8L1185.5 349.2L1189.1 345.2L1192.7 341.0L1196.4 336.4L1200.0 331.4L1203.6 326.2L1207.2 320.6L1210.9 314.6L1214.5 308.4L1218.1 301.9L1221.8 295.2L1225.4 288.1L1229.0 280.9L1232.6 273.6L1236.3 266.1L1239.9 258.5L1243.5 250.9L1247.1 243.4L1250.8 236.0L1254.4 228.7L1258.0 221.6L1261.6 214.8L1265.3 208.3L1268.9 202.2L1272.5 196.6L1276.1 191.6L1279.8 187.0L1283.4 183.1L1287.0 179.9L1290.6 177.3L1294.3 175.4L1297.9 174.3L1301.5 173.9L1305.2 174.3L1308.8 175.4L1312.4 177.3L1316.0 179.9L1319.7 183.1L1323.3 187.0L1326.9 191.6L1330.5 196.6L1334.2 202.2L1337.8 208.3L1341.4 214.8L1345.0 221.6L1348.7 228.7L1352.3 236.0L1355.9 243.4L1359.5 250.9L1363.2 258.5L1366.8 266.1L1370.4 273.6L1374.1 280.9L1377.7 288.1L1381.3 295.2L1384.9 301.9L1388.6 308.4L1392.2 314.6L1395.8 320.6L1399.4 326.2L1403.1 331.4L1406.7 336.4L1410.3 341.0L1413.9 345.2L1417.6 349.2L1421.2 352.8L1424.8 356.1L1428.4 359.1L1432.1 361.8L1435.7 364.3L1439.3 366.5L1443.0 368.5L1446.6 370.3L1450.2 371.8" stroke="#7b699d" stroke-width="1.1" stroke-dasharray="1.2 2.2" fill="none"/>
<path d="M1145.6 367.1L1149.2 364.9L1152.9 362.3L1156.5 359.5L1160.1 356.3L1163.7 352.8L1167.4 349.0L1171.0 344.8L1174.6 340.3L1178.2 335.4L1181.9 330.1L1185.5 324.4L1189.1 318.4L1192.7 312.0L1196.4 305.4L1200.0 298.4L1203.6 291.1L1207.2 283.6L1210.9 276.0L1214.5 268.1L1218.1 260.3L1221.8 252.3L1225.4 244.5L1229.0 236.7L1232.6 229.2L1236.3 221.9L1239.9 214.9L1243.5 208.3L1247.1 202.2L1250.8 196.6L1254.4 191.7L1258.0 187.4L1261.6 183.8L1265.3 180.9L1268.9 178.9L1272.5 177.6L1276.1 177.2L1279.8 177.6L1283.4 178.9L1287.0 180.9L1290.6 183.8L1294.3 187.4L1297.9 191.7L1301.5 196.6L1305.2 202.2L1308.8 208.3L1312.4 214.9L1316.0 221.9L1319.7 229.2L1323.3 236.7L1326.9 244.5L1330.5 252.3L1334.2 260.3L1337.8 268.1L1341.4 276.0L1345.0 283.6L1348.7 291.1L1352.3 298.4L1355.9 305.4L1359.5 312.0L1363.2 318.4L1366.8 324.4L1370.4 330.1L1374.1 335.4L1377.7 340.3L1381.3 344.8L1384.9 349.0L1388.6 352.8L1392.2 356.3L1395.8 359.5L1399.4 362.3L1403.1 364.9L1406.7 367.1L1410.3 369.2L1413.9 371.0L1417.6 372.5L1421.2 373.9L1424.8 375.1L1428.4 376.1L1432.1 377.0L1435.7 377.8L1439.3 378.5L1443.0 379.0L1446.6 379.5L1450.2 379.9" stroke="#3f9a7b" stroke-width="1.1" stroke-dasharray="1.2 2.2" fill="none"/>
<path d="M1145.6 372.9L1160.1 365.8L1174.6 356.9L1189.1 342.8L1203.6 324.9L1218.1 303.7L1232.6 274.1L1247.1 239.8L1261.6 205.0L1276.1 185.7L1290.6 182.9L1305.2 186.2L1319.7 182.9L1334.2 195.1L1348.7 229.9L1363.2 260.9L1377.7 292.0L1392.2 317.8L1406.7 345.1L1421.2 353.6L1435.7 363.9" stroke="#7b699d" stroke-width="1.5" fill="none" stroke-linejoin="round"/><g fill="#7b699d"><circle cx="1145.6" cy="372.9" r="1.5"/><circle cx="1160.1" cy="365.8" r="1.5"/><circle cx="1174.6" cy="356.9" r="1.5"/><circle cx="1189.1" cy="342.8" r="1.5"/><circle cx="1203.6" cy="324.9" r="1.5"/><circle cx="1218.1" cy="303.7" r="1.5"/><circle cx="1232.6" cy="274.1" r="1.5"/><circle cx="1247.1" cy="239.8" r="1.5"/><circle cx="1261.6" cy="205.0" r="1.5"/><circle cx="1276.1" cy="185.7" r="1.5"/><circle cx="1290.6" cy="182.9" r="1.5"/><circle cx="1305.2" cy="186.2" r="1.5"/><circle cx="1319.7" cy="182.9" r="1.5"/><circle cx="1334.2" cy="195.1" r="1.5"/><circle cx="1348.7" cy="229.9" r="1.5"/><circle cx="1363.2" cy="260.9" r="1.5"/><circle cx="1377.7" cy="292.0" r="1.5"/><circle cx="1392.2" cy="317.8" r="1.5"/><circle cx="1406.7" cy="345.1" r="1.5"/><circle cx="1421.2" cy="353.6" r="1.5"/><circle cx="1435.7" cy="363.9" r="1.5"/></g>
<path d="M1145.6 365.1L1160.1 354.5L1174.6 339.9L1189.1 317.8L1203.6 293.6L1218.1 262.8L1232.6 226.6L1247.1 194.2L1261.6 189.9L1276.1 193.7L1290.6 181.9L1305.2 186.2L1319.7 219.5L1334.2 263.3L1348.7 295.3L1363.2 321.4L1377.7 342.8L1392.2 356.2L1406.7 365.8L1421.2 374.0L1435.7 379.9" stroke="#3f9a7b" stroke-width="1.5" fill="none" stroke-linejoin="round"/><g fill="#3f9a7b"><circle cx="1145.6" cy="365.1" r="1.5"/><circle cx="1160.1" cy="354.5" r="1.5"/><circle cx="1174.6" cy="339.9" r="1.5"/><circle cx="1189.1" cy="317.8" r="1.5"/><circle cx="1203.6" cy="293.6" r="1.5"/><circle cx="1218.1" cy="262.8" r="1.5"/><circle cx="1232.6" cy="226.6" r="1.5"/><circle cx="1247.1" cy="194.2" r="1.5"/><circle cx="1261.6" cy="189.9" r="1.5"/><circle cx="1276.1" cy="193.7" r="1.5"/><circle cx="1290.6" cy="181.9" r="1.5"/><circle cx="1305.2" cy="186.2" r="1.5"/><circle cx="1319.7" cy="219.5" r="1.5"/><circle cx="1334.2" cy="263.3" r="1.5"/><circle cx="1348.7" cy="295.3" r="1.5"/><circle cx="1363.2" cy="321.4" r="1.5"/><circle cx="1377.7" cy="342.8" r="1.5"/><circle cx="1392.2" cy="356.2" r="1.5"/><circle cx="1406.7" cy="365.8" r="1.5"/><circle cx="1421.2" cy="374.0" r="1.5"/><circle cx="1435.7" cy="379.9" r="1.5"/></g>
<rect x="1130.7" y="163" width="335.3" height="227.7" fill="none" stroke="#444" stroke-width="1"/>
<path d="M1145.6 390.7v3M1218.1 390.7v3M1290.6 390.7v3M1363.2 390.7v3M1435.7 390.7v3M1130.7 381.8h-3M1130.7 334.8h-3M1130.7 287.7h-3M1130.7 240.7h-3M1130.7 193.7h-3" stroke="#444" stroke-width=".9" fill="none"/>
<text x="1145.6" y="406" font-size="10.5" fill="#333" text-anchor="middle">0</text>
<text x="1218.1" y="406" font-size="10.5" fill="#333" text-anchor="middle">5</text>
<text x="1290.6" y="406" font-size="10.5" fill="#333" text-anchor="middle">10</text>
<text x="1363.2" y="406" font-size="10.5" fill="#333" text-anchor="middle">15</text>
<text x="1435.7" y="406" font-size="10.5" fill="#333" text-anchor="middle">20</text>
<text x="1123" y="385.6" font-size="10.5" fill="#333" text-anchor="end">0</text>
<text x="1123" y="338.6" font-size="10.5" fill="#333" text-anchor="end">10000</text>
<text x="1123" y="291.5" font-size="10.5" fill="#333" text-anchor="end">20000</text>
<text x="1123" y="244.5" font-size="10.5" fill="#333" text-anchor="end">30000</text>
<text x="1123" y="197.5" font-size="10.5" fill="#333" text-anchor="end">40000</text>
<text x="1297.8" y="157" font-size="10.8" fill="#333" text-anchor="middle" xml:space="preserve">FWHM X: 9.79  Y: 9.23</text>
<text x="1297.8" y="421" font-size="10.5" fill="#333" text-anchor="middle">Pixels</text>
<text transform="translate(1081 277.6) rotate(-90)" font-size="10.5" fill="#333" text-anchor="middle">Brightness</text>
<rect x="1383" y="166.500" width="80" height="44.500" rx="1.500" fill="#fff" fill-opacity=".8" stroke="#ccc" stroke-width=".8"/>
<path d="M1387 174h18" stroke="#7b699d" stroke-width="1.2"/><circle cx="1396" cy="174" r="1.4" fill="#7b699d"/>
<path d="M1387 184h18" stroke="#7b699d" stroke-width="1.1" stroke-dasharray="1.2 2.2"/>
<rect x="1387" y="190.6" width="18" height="6" fill="#af87b9" fill-opacity=".5"/>
<path d="M1387 203.2h18" stroke="#3f9a7b" stroke-width="1.2"/><circle cx="1396" cy="203.2" r="1.4" fill="#3f9a7b"/>
<text x="1411" y="176.8" font-size="8.200" fill="#333">data x</text>
<text x="1411" y="186.8" font-size="8.200" fill="#333">gaussian x</text>
<text x="1411" y="196.4" font-size="8.200" fill="#333">data y</text>
<text x="1411" y="206.0" font-size="8.200" fill="#333">gaussian y</text>
</svg>
<!-- plot tabs -->
<div class="tab" style="left:1060px;top:437px;width:48px;height:18px;line-height:15px;border-top:none">Image</div>
<div class="tab" style="left:1107.500px;top:437px;width:57px;height:18px;line-height:15px;border-top:none">Contour</div>
<div class="tab on" style="left:1164px;top:436px;width:50.500px;height:20px;line-height:19px;border-top:none;border-bottom:1px solid #d6d6d6">FWHM</div>
<div class="tab" style="left:1214px;top:437px;width:48.500px;height:18px;line-height:15px;border-top:none">Radial</div>
<div class="tab" style="left:1262px;top:437px;width:31.500px;height:18px;line-height:15px;border-top:none">EE</div>
<div class="a" style="left:1258.900px;top:458.300px;width:4px;height:4px;border-radius:50%;background:#808080;box-shadow:7.200px 0 0 #808080,14.400px 0 0 #808080"></div>
<!-- pick frame -->
<div class="a" style="left:1059.500px;top:465px;width:420px;height:319px;background:#f3f3f3;border:1px solid #e2e2e2"></div>
<div class="a" style="left:1064px;top:468.500px;width:412px;height:297px;background:#efefef;border:1px solid #d9d9d9"></div>
<div class="t c" style="left:1218px;top:470px;width:100px">Pick</div>
<div class="a" style="left:1067.500px;top:487px;width:405px;height:255.500px;background:#fdfdfd;border:1px solid #dcdcdc"></div>
<div class="t r" style="left:1086px;top:489.3px;width:80.5px">Zoom:</div><div class="t" style="left:1170.5px;top:489.3px">12.35x</div>
<div class="t r" style="left:1086px;top:502.6px;width:80.5px">Object_X:</div><div class="t" style="left:1170.5px;top:502.6px">1420.662</div>
<div class="t r" style="left:1086px;top:515.8px;width:80.5px">RA:</div><div class="t" style="left:1170.5px;top:515.8px">2:27:02.647</div>
<div class="t r" style="left:1086px;top:529.1px;width:80.5px">Equinox:</div><div class="t" style="left:1170.5px;top:529.1px">2000.0</div>
<div class="t r" style="left:1086px;top:542.4px;width:80.5px">Sky Level:</div><div class="t" style="left:1170.5px;top:542.4px">8768.295</div>
<div class="t r" style="left:1086px;top:555.6px;width:80.5px">FWHM X:</div><div class="t" style="left:1170.5px;top:555.6px">9.791</div>
<div class="t r" style="left:1086px;top:568.9px;width:80.5px">FWHM:</div><div class="t" style="left:1170.5px;top:568.9px">9.516</div>
<div class="t r" style="left:1086px;top:582.2px;width:80.5px">EE (circ):</div><div class="t" style="left:1170.5px;top:582.2px">0.295</div>
<div class="t r" style="left:1086px;top:595.5px;width:80.5px">Sample Area:</div><div class="t" style="left:1170.5px;top:595.5px">31x31</div>
<div class="t r" style="left:1287px;top:502.6px;width:80.5px">Object_Y:</div><div class="t" style="left:1371.5px;top:502.6px">1377.027</div>
<div class="t r" style="left:1287px;top:515.8px;width:80.5px">DEC:</div><div class="t" style="left:1371.5px;top:515.8px">-4:21:09.00</div>
<div class="t r" style="left:1287px;top:529.1px;width:80.5px">Background:</div><div class="t" style="left:1371.5px;top:529.1px">8312.662</div>
<div class="t r" style="left:1287px;top:542.4px;width:80.5px">Brightness:</div><div class="t" style="left:1371.5px;top:542.4px">43839.652</div>
<div class="t r" style="left:1287px;top:555.6px;width:80.5px">FWHM Y:</div><div class="t" style="left:1371.5px;top:555.6px">9.233</div>
<div class="t r" style="left:1287px;top:568.9px;width:80.5px">Star Size:</div><div class="t" style="left:1371.5px;top:568.9px">1.091</div>
<div class="t r" style="left:1287px;top:582.2px;width:80.5px">EE (sq):</div><div class="t" style="left:1371.5px;top:582.2px">0.303</div>
<div class="btn" style="left:1271px;top:596.500px;width:97px;height:17px;line-height:15px">Default Region</div>
<div class="btn" style="left:1371.500px;top:596.500px;width:97px;height:17px;line-height:15px">Pan to pick</div>
<div class="a" style="left:1271px;top:618.500px;width:10.500px;height:10.500px;background:#fff;border:1px solid #d6d6d6;border-radius:2px"></div>
<div class="t" style="left:1286px;top:617.500px">Center on pick</div>
<div class="t" style="left:1071.500px;top:677px">Done</div>
<div class="btn" style="left:1071.500px;top:716.500px;width:62px;height:18px;line-height:16px;color:#c8c8c8;background:#f4f4f4;border-color:#dedede">Skip</div>
<div class="a c" style="left:1136.500px;top:716.500px;width:331px;height:18px;line-height:17px;background:linear-gradient(#68a4dc,#4e90d2);border:1px solid #4684c6;border-radius:2px;color:#eaf2fc">100%</div>
<div class="tab on" style="left:1067.500px;top:741.500px;width:57.500px;height:19.500px;line-height:19px;border-top:none">Readout</div>
<div class="tab" style="left:1124.500px;top:742.500px;width:58px;height:17.500px;line-height:15px;border-top:none">Settings</div>
<div class="tab" style="left:1182px;top:742.500px;width:59px;height:17.500px;line-height:15px;border-top:none">Controls</div>
<div class="tab" style="left:1240.500px;top:742.500px;width:48.500px;height:17.500px;line-height:15px;border-top:none">Report</div>
<!-- radios -->
<div class="a" style="left:1059.500px;top:792.500px;width:10px;height:10px;border-radius:50%;background:#fff;border:1px solid #c4c4c4"></div>
<div class="a" style="left:1062.500px;top:795.500px;width:4px;height:4px;border-radius:50%;background:#333"></div>
<div class="t" style="left:1075px;top:791px">Move</div>
<div class="a" style="left:1109.500px;top:792.500px;width:10px;height:10px;border-radius:50%;background:#fff;border:1px solid #c9c9c9"></div>
<div class="t" style="left:1124.500px;top:791px">Draw</div>
<div class="a" style="left:1158.500px;top:792.500px;width:10px;height:10px;border-radius:50%;background:#fff;border:1px solid #c9c9c9"></div>
<div class="t" style="left:1174px;top:791px">Edit</div>
<div class="btn" style="left:1059.500px;top:811px;width:62px;height:17.500px;line-height:15px">Close</div>
<div class="btn" style="left:1125px;top:811px;width:62px;height:17.500px;line-height:15px">Help</div>
<!-- toolbar -->
<div class="btn" style="left:69.500px;top:840px;width:82.500px;height:16px;text-align:left;padding-left:3px;line-height:14px;border-left:none">Ginga Image<span class="a" style="right:5px;top:6px;border:2.500px solid transparent;border-top:3px solid #555"></span></div>
<div class="a" style="left:707.500px;top:835px;width:24.500px;height:24.500px;background:#e2e2e2;border:1px solid #d4d4d4;border-radius:2px"></div>
<svg style="left:150px;top:832px" width="850" height="34" viewBox="150 832 850 34" fill="#000" stroke="none">
 <path d="M166.300 839.800l9.300 9.200h-5.100v7h-8.400v-7h-5.100z"/>
 <path d="M193 856l9.300 -9.200h-5.100v-7h-8.400v7h-5.100z"/>
 <path d="M223.600 841v14h-7.600z"/><path d="M226.400 842.800v11.600h6.300z" fill="none" stroke="#000" stroke-width="1.100"/>
 <path d="M244.500 839.200l13.500 5.600l-13.500 2.600z"/><path d="M245.100 849.600v6.400l11 -5.200z" fill="none" stroke="#000" stroke-width="1.100"/>
 <g fill="none" stroke="#000" stroke-width="2.100"><path d="M272.400 850.200a6.800 6.800 0 0 1 2.600 -9.300M280.300 840.300a6.800 6.800 0 0 1 5.200 7.700M284.300 851.800a6.800 6.800 0 0 1 -9.800 2.200"/></g>
 <path d="M270.300 838.300l1.900 1.400l1.700 -1.700l.9 .9l-1.600 1.700l1.900 1.400l-.7 1l-2 -1.400l-1.600 1.700l-.9 -.8l1.600 -1.800l-1.900 -1.400z"/><path d="M282.600 852.800h5l-2.500 4.200z"/><path d="M283.200 844.300l4.200 1.800l-3.600 2.900z"/>
 <rect x="301.500" y="847" width="15" height="9"/><rect x="311" y="838.700" width="8.300" height="13" fill="none" stroke="#000" stroke-width="1.100"/>
 <rect x="331.300" y="847" width="15" height="9"/><rect x="329" y="838.700" width="8.300" height="13" fill="none" stroke="#000" stroke-width="1.100"/>
 <text x="364.500" y="845.800" font-size="9.300" font-weight="bold" text-anchor="middle" textLength="7.800" lengthAdjust="spacingAndGlyphs" font-family="DejaVu Sans,Liberation Sans,sans-serif">E</text>
 <path d="M355.400 851.900h8.300v-2.300l8 3.900l-8 3.900v-2.300h-8.300z"/>
 <text x="389.200" y="845.800" font-size="9.300" font-weight="bold" text-anchor="middle" textLength="7.800" lengthAdjust="spacingAndGlyphs" font-family="DejaVu Sans,Liberation Sans,sans-serif">E</text>
 <path d="M398.300 851.900h-8.300v-2.300l-8 3.900l8 3.900v-2.300h8.300z"/>
 <g fill="none" stroke="#000" stroke-width="1.500" stroke-linecap="round">
  <circle cx="419.500" cy="845.500" r="6.300"/><path d="M424.200 850.200l6 5.600" stroke-width="2.200"/><path d="M416 845.500h7M419.500 842v7" stroke-width="1.300"/>
  <circle cx="446" cy="845.500" r="6.300"/><path d="M450.700 850.200l6 5.600" stroke-width="2.200"/><path d="M442.500 845.500h7" stroke-width="1.300"/>
  <circle cx="472.500" cy="845.500" r="6.300"/><path d="M477.200 850.200l6 5.600" stroke-width="2.200"/><rect x="468.300" y="841.300" width="8.400" height="8.400" rx="1.500" stroke-width="1" stroke="#555"/>
  <circle cx="499" cy="845.500" r="6.300"/><path d="M503.700 850.200l6 5.600" stroke-width="2.200"/>
 </g>
 <text x="499" y="849.500" font-size="10" font-weight="bold" text-anchor="middle" font-family="DejaVu Sans,Liberation Sans,sans-serif">1</text>
 <g fill="none" stroke="#000" stroke-width="1.400"><path d="M533.500 841v4M533.500 849.500v4M527.500 847.200h4M536 847.200h4" stroke-dasharray="1.800 1"/></g>
 <path d="M533.500 838l3 3.500h-6zM533.500 856.400l3 -3.500h-6zM524.400 847.200l3.500 -3v6zM542.600 847.200l-3.500 -3v6z"/>
 <circle cx="560.200" cy="847" r="7" fill="none" stroke="#000" stroke-width="1.300"/><circle cx="560.200" cy="847" r="2.200"/><path d="M560.200 838.500v3M560.200 852.500v3M551.700 847h3M565.700 847h3" stroke="#000" stroke-width="1.300"/>
 <path d="M584 842.200a7 7 0 1 0 4.500 -1.300" fill="none" stroke="#000" stroke-width="1.600"/><path d="M584.500 838.500l5.200 2.200l-4.300 3.300z"/>
 <path d="M605 848.500l2.300 -1.200l3 7.200l3.300 -14.300h8.400" fill="none" stroke="#000" stroke-width="1.700"/>
 <g><path d="M633 843.500q1 -4 6 -3.800q6 .2 6.500 3.800q-2.500 1 -3 3l-2 3.500q-3.500 1.500 -6 -1q-2.500 -2.500 -1.500 -5.500z"/><circle cx="636.300" cy="843" r="1" fill="#f0f0f0"/><circle cx="640" cy="842" r="1" fill="#f0f0f0"/><circle cx="635.600" cy="846.800" r="1" fill="#f0f0f0"/><circle cx="638.500" cy="849.500" r="1" fill="#f0f0f0"/><path d="M641 846.500l5 8.500" stroke="#000" stroke-width="2" fill="none"/><path d="M643.500 844.500q2 1 2.500 3" stroke="#000" stroke-width="1.300" fill="none"/></g>
 <path d="M658 851q4 0 6 -5t4.500 -4.500q2.500 .5 3.500 5t3.500 5" fill="none" stroke="#000" stroke-width="1.500"/><path d="M660 843.500q-.5 3 1 5M675 843.500q.5 3 -1 5" stroke="#000" stroke-width="1.600" fill="none"/>
 <circle cx="692.700" cy="847" r="4.600"/><path d="M692.700 838.500v3M692.700 852.500v3M684.200 847h3M698.200 847h3M686.700 841l2 2M696.700 851l2 2M698.700 841l-2 2M686.700 853l2 -2" stroke="#000" stroke-width="1.300"/>
 <rect x="714.300" y="846.200" width="11.200" height="10" rx="1.300"/><path d="M716.500 846.500v-4a3.400 3.400 0 0 1 6.800 0v4" fill="none" stroke="#000" stroke-width="1.700"/>
 <rect x="742.600" y="840.700" width="17.600" height="13.300" fill="none" stroke="#000" stroke-width="1.300"/><path d="M751.400 843.500v7.800M747.500 847.400h7.800" stroke="#000" stroke-width=".9"/>
 <path d="M773.500 839.800a8.200 8.200 0 1 0 4.200 -1.100" fill="none" stroke="#000" stroke-width="1.300"/><path d="M771.500 838l4 1l-3 3.200z"/>
 <text x="777.900" y="851" font-size="10" font-weight="bold" text-anchor="middle" font-family="DejaVu Sans,Liberation Sans,sans-serif">R</text>
 <path d="M796 851q3.500 0 5.500 -5t3.500 -4.500q1.500 .5 3 5t3.500 4.500" fill="none" stroke="#000" stroke-width="1.300"/><path d="M797.500 843.500q-.5 3 1 5M811.500 843.500q.5 3 -1 5" stroke="#000" stroke-width="1.500" fill="none"/>
 <text x="804.600" y="851.500" font-size="6.500" font-weight="bold" text-anchor="middle" font-family="DejaVu Sans,Liberation Sans,sans-serif">A</text>
 <circle cx="831.200" cy="847" r="4.700"/><path d="M831.200 840v2M831.200 852v2M824.200 847h2M836.200 847h2" stroke="#555" stroke-width=".8"/>
 <g transform="translate(863 847)"><path d="M-2 -9.300h4l.8 3h-5.600z" transform="rotate(0)"/><path d="M-2 -9.300h4l.8 3h-5.600z" transform="rotate(45)"/><path d="M-2 -9.300h4l.8 3h-5.600z" transform="rotate(90)"/><path d="M-2 -9.300h4l.8 3h-5.600z" transform="rotate(135)"/><path d="M-2 -9.300h4l.8 3h-5.600z" transform="rotate(180)"/><path d="M-2 -9.300h4l.8 3h-5.600z" transform="rotate(225)"/><path d="M-2 -9.300h4l.8 3h-5.600z" transform="rotate(270)"/><path d="M-2 -9.300h4l.8 3h-5.600z" transform="rotate(315)"/><circle r="5.300" fill="none" stroke="#000" stroke-width="3.800"/></g>
 <path d="M881.500 853.500v-12.500q0 -1 1 -1h4.500l2 2h7q1 0 1 1v2M881.500 854.500l2.300 -8.500q.3 -1 1.300 -1h13q1.200 0 .9 1.200l-2 7.300q-.3 1 -1.300 1h-13.200q-1 0 -1 -1z" fill="none" stroke="#000" stroke-width="1.300" stroke-linejoin="round"/>
 <path d="M916 838.500l9 4.300l-9 4.300l-9 -4.300z"/><path d="M907 846.800l2.600 -1.200l6.400 3l6.400 -3l2.600 1.200l-9 4.300z"/><path d="M907 850.800l2.600 -1.200l6.400 3l6.400 -3l2.600 1.200l-9 4.300z"/>
 <g fill="none" stroke="#000" stroke-width="1.300" stroke-linejoin="round"><path d="M936.500 840h6.500l8.500 8.500q.7 .7 0 1.400l-5 5q-.7 .7 -1.400 0l-8.600 -8.500z"/><path d="M934.300 842v5.500l8.700 8.700q.7 .7 1.500 .2"/></g><circle cx="940" cy="843.500" r="1.200"/>
 <g><path d="M966.500 838.500h3.500v7.500h-3.500z"/><path d="M965 846h6.500v1.800h-6.500z"/><path d="M970 841.500q6 1 6 7q0 3.500 -2.500 5.200" fill="none" stroke="#000" stroke-width="1.700"/><rect x="963" y="854.300" width="14" height="2.200" rx=".6"/><path d="M964.500 850.500h7" stroke="#000" stroke-width="1.700"/><circle cx="973.800" cy="849" r="1.700" fill="#f0f0f0"/></g>
</svg>
<!-- Remmina window -->
<div class="a" style="left:1520px;top:22px;width:475.500px;height:355px;background:#fefefe;border:1px solid #d6d0d8;box-shadow:0 1px 3px rgba(0,0,0,.25)"></div>
<div class="a" style="left:1521px;top:23px;width:473.500px;height:36px;background:linear-gradient(#eeedec,#e6e5e4);border-bottom:1px solid #d8d7d6"></div>
<div class="a" style="left:1528.500px;top:30px;width:25.500px;height:25px;background:#f7f7f6;border:1px solid #e2e1e0;border-radius:4px"></div>
<svg style="left:1534px;top:35px" width="16" height="16" viewBox="0 0 16 16" fill="none" stroke="#222" stroke-width="1.500"><path d="M8 14H3V2h6.500l3 3v3.500M12.500 10.500v5M10 13h5"/></svg>
<div class="a" style="left:1563.500px;top:30px;width:25.500px;height:25px;background:#dad9d8;border:1px solid #d4d3d2;border-radius:4px"></div>
<svg style="left:1569px;top:35px" width="16" height="16" viewBox="0 0 16 16" fill="none" stroke="#222" stroke-width="1.600"><circle cx="7" cy="7" r="4.300"/><path d="M10.200 10.200l3.500 3.500"/></svg>
<div class="t" style="left:1608.500px;top:35px;font-size:10.300px;font-weight:bold;line-height:15px;color:#2e3436;letter-spacing:.2px">Remmina Remote Desktop Client</div>
<div class="a" style="left:1521px;top:59px;width:473.500px;height:38.500px;background:#f0f0f0"></div>
<div class="btn" style="left:1535px;top:67.500px;width:50.500px;height:24px;line-height:22px;border-radius:3px;text-align:left;padding-left:7px;font-size:9.600px">RDP<span class="a" style="right:6.500px;top:9px;border:4px solid transparent;border-top:5px solid #333"></span></div>
<div class="inp" style="left:1588px;top:67.500px;width:300px;height:24px;border-radius:3px"></div>
<div class="a" style="left:1521px;top:97.500px;width:473.500px;height:19.500px;background:#f7f7f7;border-top:1px solid #dfdfdf;border-bottom:1px solid #e2e2e2"></div>
<div class="t" style="left:1528.500px;top:100.500px;font-size:10.100px;font-weight:bold;color:#a2a2a2">Name</div>
<div class="a" style="left:1635px;top:105px;border:3.500px solid transparent;border-top:4px solid #777"></div>
<div class="a" style="left:1650px;top:99px;width:1px;height:17px;background:#e0e0e0"></div>
<div class="t" style="left:1655.500px;top:100.500px;font-size:10.100px;font-weight:bold;color:#a2a2a2">Group</div>
<div class="a" style="left:1710.500px;top:99px;width:1px;height:17px;background:#e0e0e0"></div>
<div class="t" style="left:1716px;top:100.500px;font-size:10.100px;font-weight:bold;color:#a2a2a2">Server</div>
<div class="a" style="left:1521px;top:117.500px;width:240px;height:18.500px;background:#4a8fdb"></div>
<div class="a" style="left:1650px;top:117.500px;width:1px;height:18.500px;background:#9cc0ea"></div>
<div class="a" style="left:1710.500px;top:117.500px;width:1px;height:18.500px;background:#9cc0ea"></div>
<svg style="left:1524.500px;top:120px" width="13" height="13" viewBox="0 0 13 13"><circle cx="6.500" cy="6.500" r="5.200" fill="none" stroke="#fff" stroke-width="2"/><path d="M6.500 3.800l2.600 2.700l-2.600 2.700l-2.600 -2.700z" fill="none" stroke="#fff" stroke-width="1.300"/></svg>
<div class="t" style="left:1548px;top:120.300px;font-size:10.100px;color:#f4f8fd">IRD - FIM computer</div>
<div class="t" style="left:1714.500px;top:120.300px;font-size:10.100px;color:#f4f8fd">133.40</div>
<svg style="left:1524.500px;top:138.500px" width="14" height="14" viewBox="0 0 14 14"><rect x="1.200" y="1.200" width="7" height="7" rx="1" fill="#fff" stroke="#111" stroke-width="1.400"/><rect x="5" y="5" width="8" height="8" rx="1" fill="#111"/></svg>
<div class="t" style="left:1548.500px;top:139.300px;font-size:10.100px;color:#222">Vampires</div>
<div class="t" style="left:1714.500px;top:139.300px;font-size:9.800px;color:#222">133.40.162.196:1</div>
<div class="t" style="left:1808.500px;top:139.300px;font-size:10.100px;color:#222">VNC</div>
<div class="t" style="left:1870.500px;top:139.300px;font-size:9.900px;color:#222">2024-10-14 - 06:27:32</div>
<div class="a" style="left:1521px;top:346.500px;width:473.500px;height:29.500px;background:#f5f5f3;border-top:1px solid #e9e9e7"></div>
<div class="t" style="left:1534.500px;top:352.500px;font-size:10.100px;color:#444">Total 2 items.</div>
<svg style="left:1972px;top:353px" width="12" height="12" viewBox="0 0 12 12" fill="none" stroke="#222" stroke-width="1.500"><path d="M1.500 8.500l5 -5M10.500 3.500l-5 5"/><path d="M6.800 1.500h4v4zM5.200 10.500h-4v-4z" fill="#222" stroke="none"/></svg>
<div class="a" style="left:1995.500px;top:21px;width:4.500px;height:1079px;background:#2b2a2c"></div>
<!-- webcam overlay -->
<svg style="left:1750px;top:0" width="250" height="139" viewBox="1750 0 250 139">
 <defs><filter id="bl" x="-10%" y="-10%" width="120%" height="120%"><feGaussianBlur stdDeviation="1.300"/></filter>
 <clipPath id="wc"><rect x="1750" y="0" width="250" height="139"/></clipPath></defs>
 <g clip-path="url(#wc)"><g filter="url(#bl)">
 <rect x="1740" y="-10" width="270" height="160" fill="#e8dfb2"/>
 <path d="M1740 -10h270v22h-270z" fill="#e2d8a8"/>
 <path d="M1746 1l180 55v90h-180z" fill="#403e39"/>
 <!-- monitor 1 -->
 <path d="M1746 1l112 36l-3 53l-109 -14z" fill="#3d3b37"/>
 <path d="M1749 7l106 33l-2 45l-104 -12z" fill="#e6ecee"/>
 <path d="M1749 7l106 33v3.500l-106 -32z" fill="#a5cbd0"/>
 <path d="M1752 14l16 5v3l-16 -5z" fill="#6aa97a"/>
 <path d="M1790 46l24 4.500v2.500l-24 -4.500zM1776 39l12 3v2l-12 -3z" fill="#a9d6ac"/>
 <path d="M1826 40l22 6v6l-22 -5z" fill="#d8cde0"/>
 <path d="M1834 49q8 -5 16 -1M1835 58q7 1 12 8M1833 70q7 2 13 7" stroke="#7682c4" stroke-width="1.400" fill="none"/>
 <path d="M1752 30l20 4v36l-20 -3z" fill="#dfe6ea"/>
 <!-- monitor 2 -->
 <path d="M1859 37l67 19v42l-68 -10z" fill="#3d3b37"/>
 <path d="M1862 43l62 16v35l-62 -8z" fill="#e2dfe8"/>
 <path d="M1864.500 46.500l11.500 3v12.500l-11.500 -2.500z" fill="#5e5e61"/>
 <path d="M1878 51.500l19 5v22l-19 -3.500z" fill="#696a6e"/>
 <path d="M1862 81l20.500 3v5.500l-20.500 -3z" fill="#353432"/>
 <path d="M1899 57l9 2.500v14l-9 -2z" fill="#d9e2e0"/><path d="M1911 62l11 3v24l-11 -2z" fill="#cdbfd6"/>
 <!-- monitor 3 -->
 <path d="M1746 78l110 13v52h-110z" fill="#3d3b37"/>
 <path d="M1749 84l105 11v46h-105z" fill="#ece8ef"/>
 <path d="M1749 92l11 1v22l-11 -1z" fill="#c78a40"/>
 <path d="M1763 89.500l42 3.500v24l-42 -2.500z" fill="#39342f"/><path d="M1771 91.500l27.500 2.500v21l-27.500 -1.500z" fill="#da6a3b"/>
 <path d="M1759.500 122l42 2v18h-42z" fill="#2e2b29"/><path d="M1804 123l33 1.500v18h-33z" fill="#37322e"/>
 <ellipse cx="1821.500" cy="136.500" rx="12" ry="12" fill="#cf7a3c"/>
 <path d="M1839 95l14 1.500v4l-14 -1.500z" fill="#7db787"/>
 <path d="M1808 110l20 1.500v3l-20 -1.500z" fill="#d6d0dc"/>
 <!-- monitor 4 -->
 <path d="M1858 92l68 8v42h-68z" fill="#3d3b37"/>
 <path d="M1861.500 98l62 7v36h-62z" fill="#ece8f2"/>
 <path d="M1863 100l7 1v14.500l-7 -1z" fill="#55555a"/>
 <path d="M1886 104l12 1.500v2l-12 -1.500zM1893 121l7 .8v4l-7 -.8z" fill="#bdb6c6"/>
 <path d="M1926.500 62l10 3v31l-10 -2z" fill="#e4e1ea"/>
 <!-- person -->
 <path d="M1918 145q0 -34 8 -40q8 -7 22 -11l58 -14v65z" fill="#1a1516"/>
 <path d="M1945 94q10 26 30 28q14 0 31 -18v-24l-50 4z" fill="#cf9a84"/>
 <path d="M1945.500 95.500q9 25 29.500 27q15 0 31 -18" stroke="#e6dccd" stroke-width="2" fill="none"/>
 <path d="M1922 36q-3 -32 14 -46h72v62z" fill="#cdb18c"/>
 <path d="M1927 48q-3 -36 22 -46q16 -5 57 -2v104q-18 4 -40 -3q-22 -8 -32 -30q-6 -11 -7 -23z" fill="#d9a48c"/>
 <ellipse cx="1965" cy="24" rx="28" ry="17" fill="#e4b9a0" opacity=".85"/>
 <path d="M1930 14q8 -18 30 -20l46 -2v10q-30 -8 -52 0q-14 6 -24 12z" fill="#d3b892" opacity=".9"/>
 <path d="M1992 -4q12 16 14 48v-48z" fill="#c6a985"/>
 <path d="M1927 48q0 22 10 38q8 12 20 18q-16 -20 -18 -40q-2 -16 0 -30q-8 4 -12 14z" fill="#c08f78" opacity=".75"/>
 <ellipse cx="1958" cy="62" rx="8" ry="7" fill="#cc917b"/>
 <ellipse cx="1944" cy="51" rx="8.500" ry="4" fill="#a87a68" opacity=".7"/><ellipse cx="1979" cy="50" rx="8.500" ry="4" fill="#a87a68" opacity=".7"/>
 <path d="M1938 50q5 -2.500 11 0M1973 49q6 -2.500 12 -.5" stroke="#6f5248" stroke-width="1.600" fill="none"/>
 <path d="M1950 78q12 5 25 -2" stroke="#a9675f" stroke-width="2.600" fill="none"/>
 <ellipse cx="1962" cy="86" rx="16" ry="6" fill="#e0ae98" opacity=".6"/>
 </g></g>
</svg>
<!-- taskbar -->
<div class="a" style="left:144px;top:1080.500px;width:585px;height:19.500px;background:#e7e6e8;border-radius:6px 0 0 0"></div>
<div class="a" style="left:377px;top:1080.500px;width:116px;height:19.500px;background:#d3d2d4;border-left:1px solid #aaa;border-right:1px solid #bbb"></div>
<div class="a" style="left:610px;top:1082px;width:1px;height:17px;background:#b5b5b5"></div>
<svg style="left:150px;top:1081px" width="90" height="19" viewBox="150 1081 90 19">
 <path d="M160.500 1091.500a2 2 0 1 1 1.500 -3.300a3.600 3.600 0 0 1 -1.500 6.300a5.500 5.500 0 0 1 -5 -7.500a6.500 6.500 0 0 1 11.500 -1.500q2.500 5 -1 10" fill="none" stroke="#b25a70" stroke-width="1.300"/>
 <rect x="182" y="1085" width="15" height="11" rx="1" fill="#2c2f33" stroke="#777" stroke-width=".8"/><path d="M184.500 1088.500l2.500 1.800l-2.500 1.800M188.500 1093h4" stroke="#e8e8e8" stroke-width="1" fill="none"/>
 <circle cx="208.800" cy="1090" r="8" fill="#db4437"/><path d="M208.800 1090l-7 -4a8 8 0 0 0 3 11z" fill="#0f9d58"/><path d="M208.800 1090l4 7a8 8 0 0 0 3 -11z" fill="#f4c20d"/><circle cx="208.800" cy="1090" r="3.800" fill="#fff"/><circle cx="208.800" cy="1090" r="2.900" fill="#4285f4"/>
 <circle cx="226.500" cy="1090.500" r="7.300" fill="#f0872b"/><path d="M220 1088a7 7 0 0 1 13 1a7.300 7.300 0 0 1 -6 8.700q5 -4 1 -9q-3 -3 -8 -.7z" fill="#e2452e"/><circle cx="227" cy="1091" r="3.300" fill="#7a4bb8"/><path d="M221.500 1085.500q3 -2 6 0" stroke="#f7c53c" stroke-width="1.600" fill="none"/>
</svg>
<div class="a" style="left:264px;top:1084.500px;width:11px;height:10px;background:#2f3b40;border:1px solid #65757a"></div>
<div class="t" style="left:280.500px;top:1083px;font-size:10.300px;line-height:14px;color:#333">Terminal - obsus...</div>
<svg style="left:380px;top:1083.500px" width="14" height="14" viewBox="0 0 12 12"><rect width="12" height="12" rx="2" fill="#26308c"/><path d="M6 6.200a1.200 1.200 0 1 1 1.300-1.300a2.400 2.400 0 1 1-3.600 1.700a3.600 3.600 0 0 1 5.600-2.900" fill="none" stroke="#dfe6ff" stroke-width="1"/></svg>
<div class="t" style="left:397.800px;top:1083px;font-size:10.300px;line-height:14px;color:#333">Fitsview: MOIRC...</div>
<svg style="left:498px;top:1084px" width="13" height="13" viewBox="0 0 13 13"><circle cx="6.500" cy="6.500" r="5.500" fill="#e8f2f6" stroke="#9cc7d8" stroke-width="1.200"/><path d="M6.500 3.500l2.500 3l-2.500 3l-2.500 -3z" fill="none" stroke="#a9cfdc" stroke-width="1"/></svg>
<div class="t" style="left:515px;top:1083px;font-size:10.300px;line-height:14px;color:#333">Remmina Remo...</div>
<svg style="left:613.500px;top:1083.500px" width="14" height="14" viewBox="0 0 12 12"><rect width="12" height="12" rx="2" fill="#26308c"/><path d="M6 6.200a1.200 1.200 0 1 1 1.300-1.300a2.400 2.400 0 1 1-3.600 1.700a3.600 3.600 0 0 1 5.600-2.900" fill="none" stroke="#dfe6ff" stroke-width="1"/></svg>
<div class="t" style="left:632.500px;top:1083px;font-size:10.300px;line-height:14px;color:#333">QL_MOIRCS</div>
<div class="a" style="left:729px;top:1084px;width:69px;height:16px;background:#f3efc0;border:1px solid #3a3a32"></div>
<div class="t" style="left:734px;top:1085px;font-size:10.300px;line-height:14px;color:#2a2a22">QL_MOIRCS</div>
<!-- tray -->
<div class="a" style="left:1703px;top:1081px;width:153px;height:19px;background:#e8e4ea"></div>
<div class="a" style="left:1703px;top:1083px;width:4px;height:16px;background:#cfcfcf;border:1px solid #aaa"></div>
<div class="a" style="left:1711px;top:1083px;width:30px;height:15px;background:#ece9ec;border:1px solid #d8d4d8"></div>
<div class="a" style="left:1745px;top:1083px;width:27px;height:15px;background:#df98e6"></div>
<div class="a" style="left:1750px;top:1085px;width:1px;height:8px;background:#53306a"></div>
<svg style="left:1782px;top:1082px" width="17" height="17" viewBox="0 0 17 17"><circle cx="8.500" cy="8.500" r="6.700" fill="#eef6fb" stroke="#4aa0d0" stroke-width="1.700"/><path d="M5.500 5.500l6 6M8.500 5v2.500M12 8.500h-2.500" stroke="#4aa0d0" stroke-width="1.200"/></svg>
<div class="t mono" style="left:1809px;top:1083px;font-size:12px;font-weight:bold;line-height:14px;color:#5a5f96;letter-spacing:.6px">02:06</div>
<!-- video player overlay -->
<div class="a" style="left:0;top:1100px;width:2000px;height:25px;background:#000"></div>
<div class="a" style="left:13px;top:1105px;width:1975px;height:12.500px;border:1px solid #3f6fa8;background:#1a1a1a"></div>
<div class="a" style="left:15px;top:1107px;width:1400px;height:9px;background:#ee2f3b"></div>
<div class="a" style="left:1415px;top:1107px;width:165px;height:9px;background:linear-gradient(90deg,#ee2f3b,#e83a8c 70%,#e040a0)"></div>
<div class="a" style="left:1592px;top:1107px;width:12px;height:9px;background:#6a6a6a"></div>
<div class="a" style="left:1567.500px;top:1098px;width:25px;height:25px;border-radius:50%;background:#f02f3a"></div>
<div class="a" style="left:1677.500px;top:1030px;width:307px;height:54px;border-radius:27px;background:rgba(72,72,72,.62)"></div>
<svg style="left:1677px;top:1030px" width="307" height="54" viewBox="1677 1030 307 54" fill="none" stroke="#fff" stroke-width="2.300" stroke-linejoin="round" stroke-linecap="round">
 <path d="M1697.500 1055.500h4.500v12.500h-4.500q-2 0 -2 -2v-8.500q0 -2 2 -2zM1702 1056.500l3.500 -4.500q1.500 -2.500 1 -5.500q-.3 -2.500 2 -2.500q2.500 .5 2.500 4.500l-.8 5h5.300q2.500 0 2 2.500l-1.500 10q-.5 2.500 -3 2.500h-11"/>
 <path d="M1763.500 1057.500h-4.500v-12.500h4.500q2 0 2 2v8.500q0 2 -2 2zM1759 1056.500l-3.500 4.500q-1.500 2.500 -1 5.500q.3 2.500 -2 2.500q-2.500 -.5 -2.500 -4.500l.8 -5h-5.300q-2.500 0 -2 -2.500l1.500 -10q.5 -2.500 3 -2.500h11"/>
 <path d="M1810 1043h20q3.500 0 3.500 3.500v14q0 3.500 -3.500 3.500h-8l-5 5v-5h-7q-3.500 0 -3.500 -3.500v-14q0 -3.500 3.500 -3.500z"/><path d="M1813 1051h14M1813 1057h9" stroke-width="2"/>
 <path d="M1884 1043.500l13 11.500l-13 11.500v-7q-9 -.5 -14 8.500q0 -15 14 -17.500z"/>
 <g fill="#fff" stroke="none"><circle cx="1947" cy="1046.500" r="2.800"/><circle cx="1947" cy="1056" r="2.800"/><circle cx="1947" cy="1065.500" r="2.800"/></g>
</svg>
<div class="a" style="left:1954px;top:1079px;width:34px;height:34px;border-radius:50%;background:#151515"></div>
<svg style="left:1954px;top:1079px" width="34" height="34" viewBox="0 0 34 34" fill="none" stroke="#fff" stroke-width="1.700" stroke-linecap="round"><path d="M9.500 13.500v-2.500q0 -1.500 1.500 -1.500h2.500M20.500 9.500h2.500q1.500 0 1.500 1.500v2.500M24.500 20.500v2.500q0 1.500 -1.500 1.500h-2.500M13.500 24.500h-2.500q-1.500 0 -1.500 -1.500v-2.500M12 14h10M12 17.300h10M12 20.500h7"/></svg>
</div>
</body></html>
